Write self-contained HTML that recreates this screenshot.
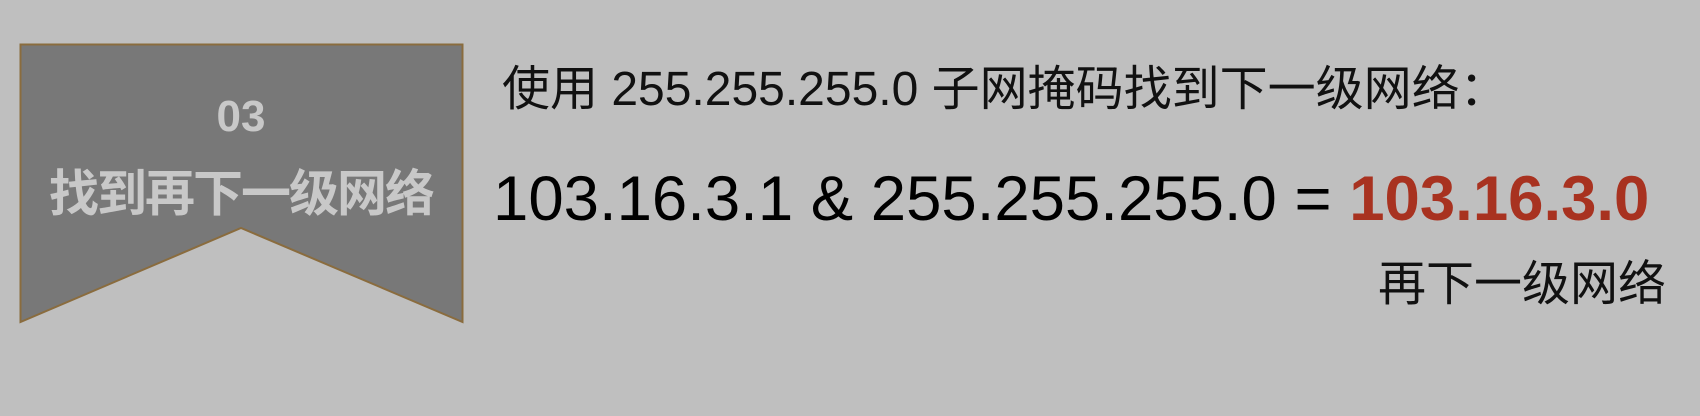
<!DOCTYPE html>
<html><head><meta charset="utf-8"><style>
html,body{margin:0;padding:0}
body{width:1700px;height:416px;background:#bfbfbf;position:relative;overflow:hidden;font-family:"Liberation Sans","Noto Sans CJK SC",sans-serif}
.t{position:absolute;white-space:nowrap;line-height:1}
</style></head><body>
<svg width="1700" height="416" style="position:absolute;left:0;top:0">
<polygon points="20.5,44.5 462.5,44.5 462.5,322 241,228 20.5,322" fill="#787878" stroke="#8a6c3e" stroke-width="2"/>
</svg>
<div class="t" style="left:20px;width:442px;text-align:center;top:95px;font-size:44px;font-weight:bold;color:#c8c8c8">03</div>
<div class="t" style="left:20px;width:442px;text-align:center;top:165px;font-size:50px;font-weight:bold;color:#c8c8c8;font-family:'Noto Sans CJK SC',sans-serif;letter-spacing:-2px">找到再下一级网络</div>
<div class="t" style="left:502px;top:66px;font-size:48px;color:#111">使用 255.255.255.0 子网掩码找到下一级网络：</div>
<div class="t" style="left:493px;top:168px;font-size:63.5px;color:#000">103.16.3.1 &amp; 255.255.255.0 = <span style="color:#a83220;font-weight:bold">103.16.3.0</span></div>
<div class="t" style="left:1378px;top:261px;font-size:48px;color:#111">再下一级网络</div>
</body></html>
